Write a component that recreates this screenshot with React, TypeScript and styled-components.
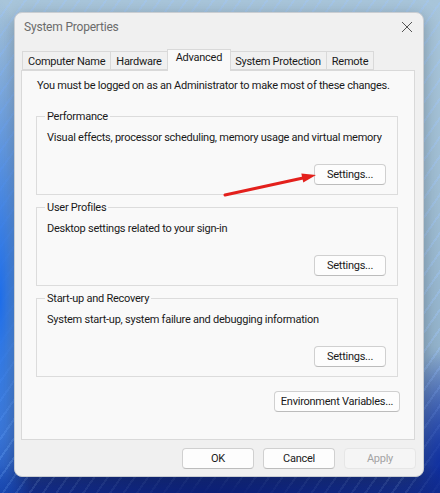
import React from "react";
import styled, { createGlobalStyle } from "styled-components";

const GlobalStyle = createGlobalStyle`
  html, body {
    margin: 0;
    padding: 0;
  }
  body {
    width: 440px;
    height: 493px;
    overflow: hidden;
    font-family: "Roboto", "Noto Sans", sans-serif;
    letter-spacing: -0.25px;
  }
`;

const Desktop = styled.div`
  position: relative;
  width: 440px;
  height: 493px;
  box-sizing: border-box;
  padding: 12px 16px 16px 14px;
  background:
    repeating-linear-gradient(125deg, rgba(255, 255, 255, 0) 0 9px, rgba(160, 200, 255, 0.35) 9px 11px),
    linear-gradient(180deg, #a8c5da 0%, #9fbdd3 40%, #93b3cc 70%, #5b7fc0 88%, #1a3a9a 100%);

  &::before {
    content: "";
    position: absolute;
    inset: 0;
    background:
      radial-gradient(ellipse 40px 300px at 0px 300px, rgba(30, 110, 235, 1), rgba(30, 110, 235, 0) 100%),
      radial-gradient(ellipse 300px 40px at 220px 493px, rgba(12, 32, 120, 1), rgba(12, 32, 120, 0.6) 60%, rgba(12, 32, 120, 0) 100%),
      radial-gradient(ellipse 40px 120px at 440px 470px, rgba(16, 48, 160, 1), rgba(16, 48, 160, 0) 100%);
    pointer-events: none;
  }
`;

const Window = styled.div`
  position: relative;
  width: 410px;
  height: 465px;
  box-sizing: border-box;
  background: #f0f0f0;
  border: 1px solid #c9cdd2;
  border-radius: 8px;
  box-shadow: 0 4px 16px rgba(0, 0, 0, 0.25);
  display: flex;
  flex-direction: column;
  color: #1a1a1a;
  font-size: 11px;
`;

const TitleBar = styled.div`
  height: 27px;
  display: flex;
  align-items: center;
  justify-content: space-between;
  padding: 0 8px 0 9px;
`;

const Title = styled.span`
  font-size: 12px;
  letter-spacing: -0.2px;
  color: #6b6b6b;
`;

const CloseIcon = styled.svg`
  width: 12px;
  height: 12px;
  margin-right: 2px;
`;

const TabStrip = styled.div`
  display: flex;
  align-items: flex-end;
  margin: 8px 0 0 8px;
  height: 22px;
  position: relative;
  z-index: 1;
`;

const Tab = styled.div<{ $active?: boolean }>`
  box-sizing: border-box;
  height: ${(p) => (p.$active ? "22px" : "19px")};
  padding: ${(p) => (p.$active ? "1px 8px 0" : "1px 5px 0")};
  margin: ${(p) => (p.$active ? "0 -1px -1px" : "0")};
  display: flex;
  align-items: ${(p) => (p.$active ? "flex-start" : "center")};
  background: ${(p) => (p.$active ? "#f9f9f9" : "#f0f0f0")};
  border: 1px solid #d9d9d9;
  border-bottom: ${(p) => (p.$active ? "none" : "1px solid #d9d9d9")};
  margin-left: -1px;
  white-space: nowrap;
  position: relative;
  z-index: ${(p) => (p.$active ? 2 : 1)};
`;

const Panel = styled.div`
  margin: 0 8px 0 6px;
  height: 370px;
  box-sizing: border-box;
  background: #f9f9f9;
  border: 1px solid #d9d9d9;
  padding: 7px 16px 0 14px;
  display: flex;
  flex-direction: column;
`;

const Notice = styled.p`
  margin: 0 0 15px 1px;
  line-height: 16px;
  white-space: nowrap;
`;

const Group = styled.fieldset`
  margin: 0 0 5px 0;
  padding: 6px 11px 9px 10px;
  border: 1px solid #dcdcdc;
  min-width: 0;
  box-sizing: border-box;
`;

const GroupLegend = styled.legend`
  padding: 0 2px;
  margin-left: -2px;
  line-height: 15px;
`;

const GroupText = styled.p`
  margin: 0;
  line-height: 16px;
  white-space: nowrap;
`;

const GroupActions = styled.div`
  margin-top: 18px;
  display: flex;
  justify-content: flex-end;
`;

const Button = styled.button<{ $width?: number }>`
  box-sizing: border-box;
  width: ${(p) => p.$width ?? 72}px;
  height: 21px;
  padding: 0;
  font-family: inherit;
  font-size: 11px;
  letter-spacing: inherit;
  white-space: nowrap;
  color: #1a1a1a;
  background: #fdfdfd;
  border: 1px solid #d0d0d0;
  border-bottom-color: #bcbcbc;
  border-radius: 4px;

  &:disabled {
    color: #a3a3a3;
    background: #f5f5f5;
    border-color: #e6e6e6;
  }
`;

const EnvRow = styled.div`
  display: flex;
  justify-content: flex-end;
  margin: 9px -2px 0 0;
`;

const Footer = styled.div`
  display: flex;
  justify-content: flex-end;
  gap: 9px;
  padding: 8px 7px 0 0;
`;

const Arrow = styled.svg`
  position: absolute;
  left: 0;
  top: 0;
  width: 440px;
  height: 493px;
  pointer-events: none;
`;

const groups = [
  {
    title: "Performance",
    text: "Visual effects, processor scheduling, memory usage and virtual memory",
  },
  { title: "User Profiles", text: "Desktop settings related to your sign-in" },
  {
    title: "Start-up and Recovery",
    text: "System start-up, system failure and debugging information",
  },
];

const tabs = [
  "Computer Name",
  "Hardware",
  "Advanced",
  "System Protection",
  "Remote",
];

const App: React.FC = () => {
  return (
    <>
      <GlobalStyle />
      <Desktop>
        <Window>
          <TitleBar>
            <Title>System Properties</Title>
            <CloseIcon viewBox="0 0 12 12">
              <path
                d="M1 1 L11 11 M11 1 L1 11"
                stroke="#555"
                strokeWidth="1"
                fill="none"
              />
            </CloseIcon>
          </TitleBar>
          <TabStrip>
            {tabs.map((t) => (
              <Tab key={t} $active={t === "Advanced"}>
                {t}
              </Tab>
            ))}
          </TabStrip>
          <Panel>
            <Notice>
              You must be logged on as an Administrator to make most of these
              changes.
            </Notice>
            {groups.map((g) => (
              <Group key={g.title}>
                <GroupLegend>{g.title}</GroupLegend>
                <GroupText>{g.text}</GroupText>
                <GroupActions>
                  <Button>Settings...</Button>
                </GroupActions>
              </Group>
            ))}
            <EnvRow>
              <Button $width={126}>Environment Variables...</Button>
            </EnvRow>
          </Panel>
          <Footer>
            <Button>OK</Button>
            <Button>Cancel</Button>
            <Button disabled>Apply</Button>
          </Footer>
        </Window>
        <Arrow viewBox="0 0 440 493">
          <line
            x1="225"
            y1="195"
            x2="303"
            y2="178"
            stroke="#e3201c"
            strokeWidth="3"
            strokeLinecap="round"
          />
          <polygon points="316,175 301.3,173.4 303.3,182.6" fill="#e3201c" />
        </Arrow>
      </Desktop>
    </>
  );
};

export default App;
